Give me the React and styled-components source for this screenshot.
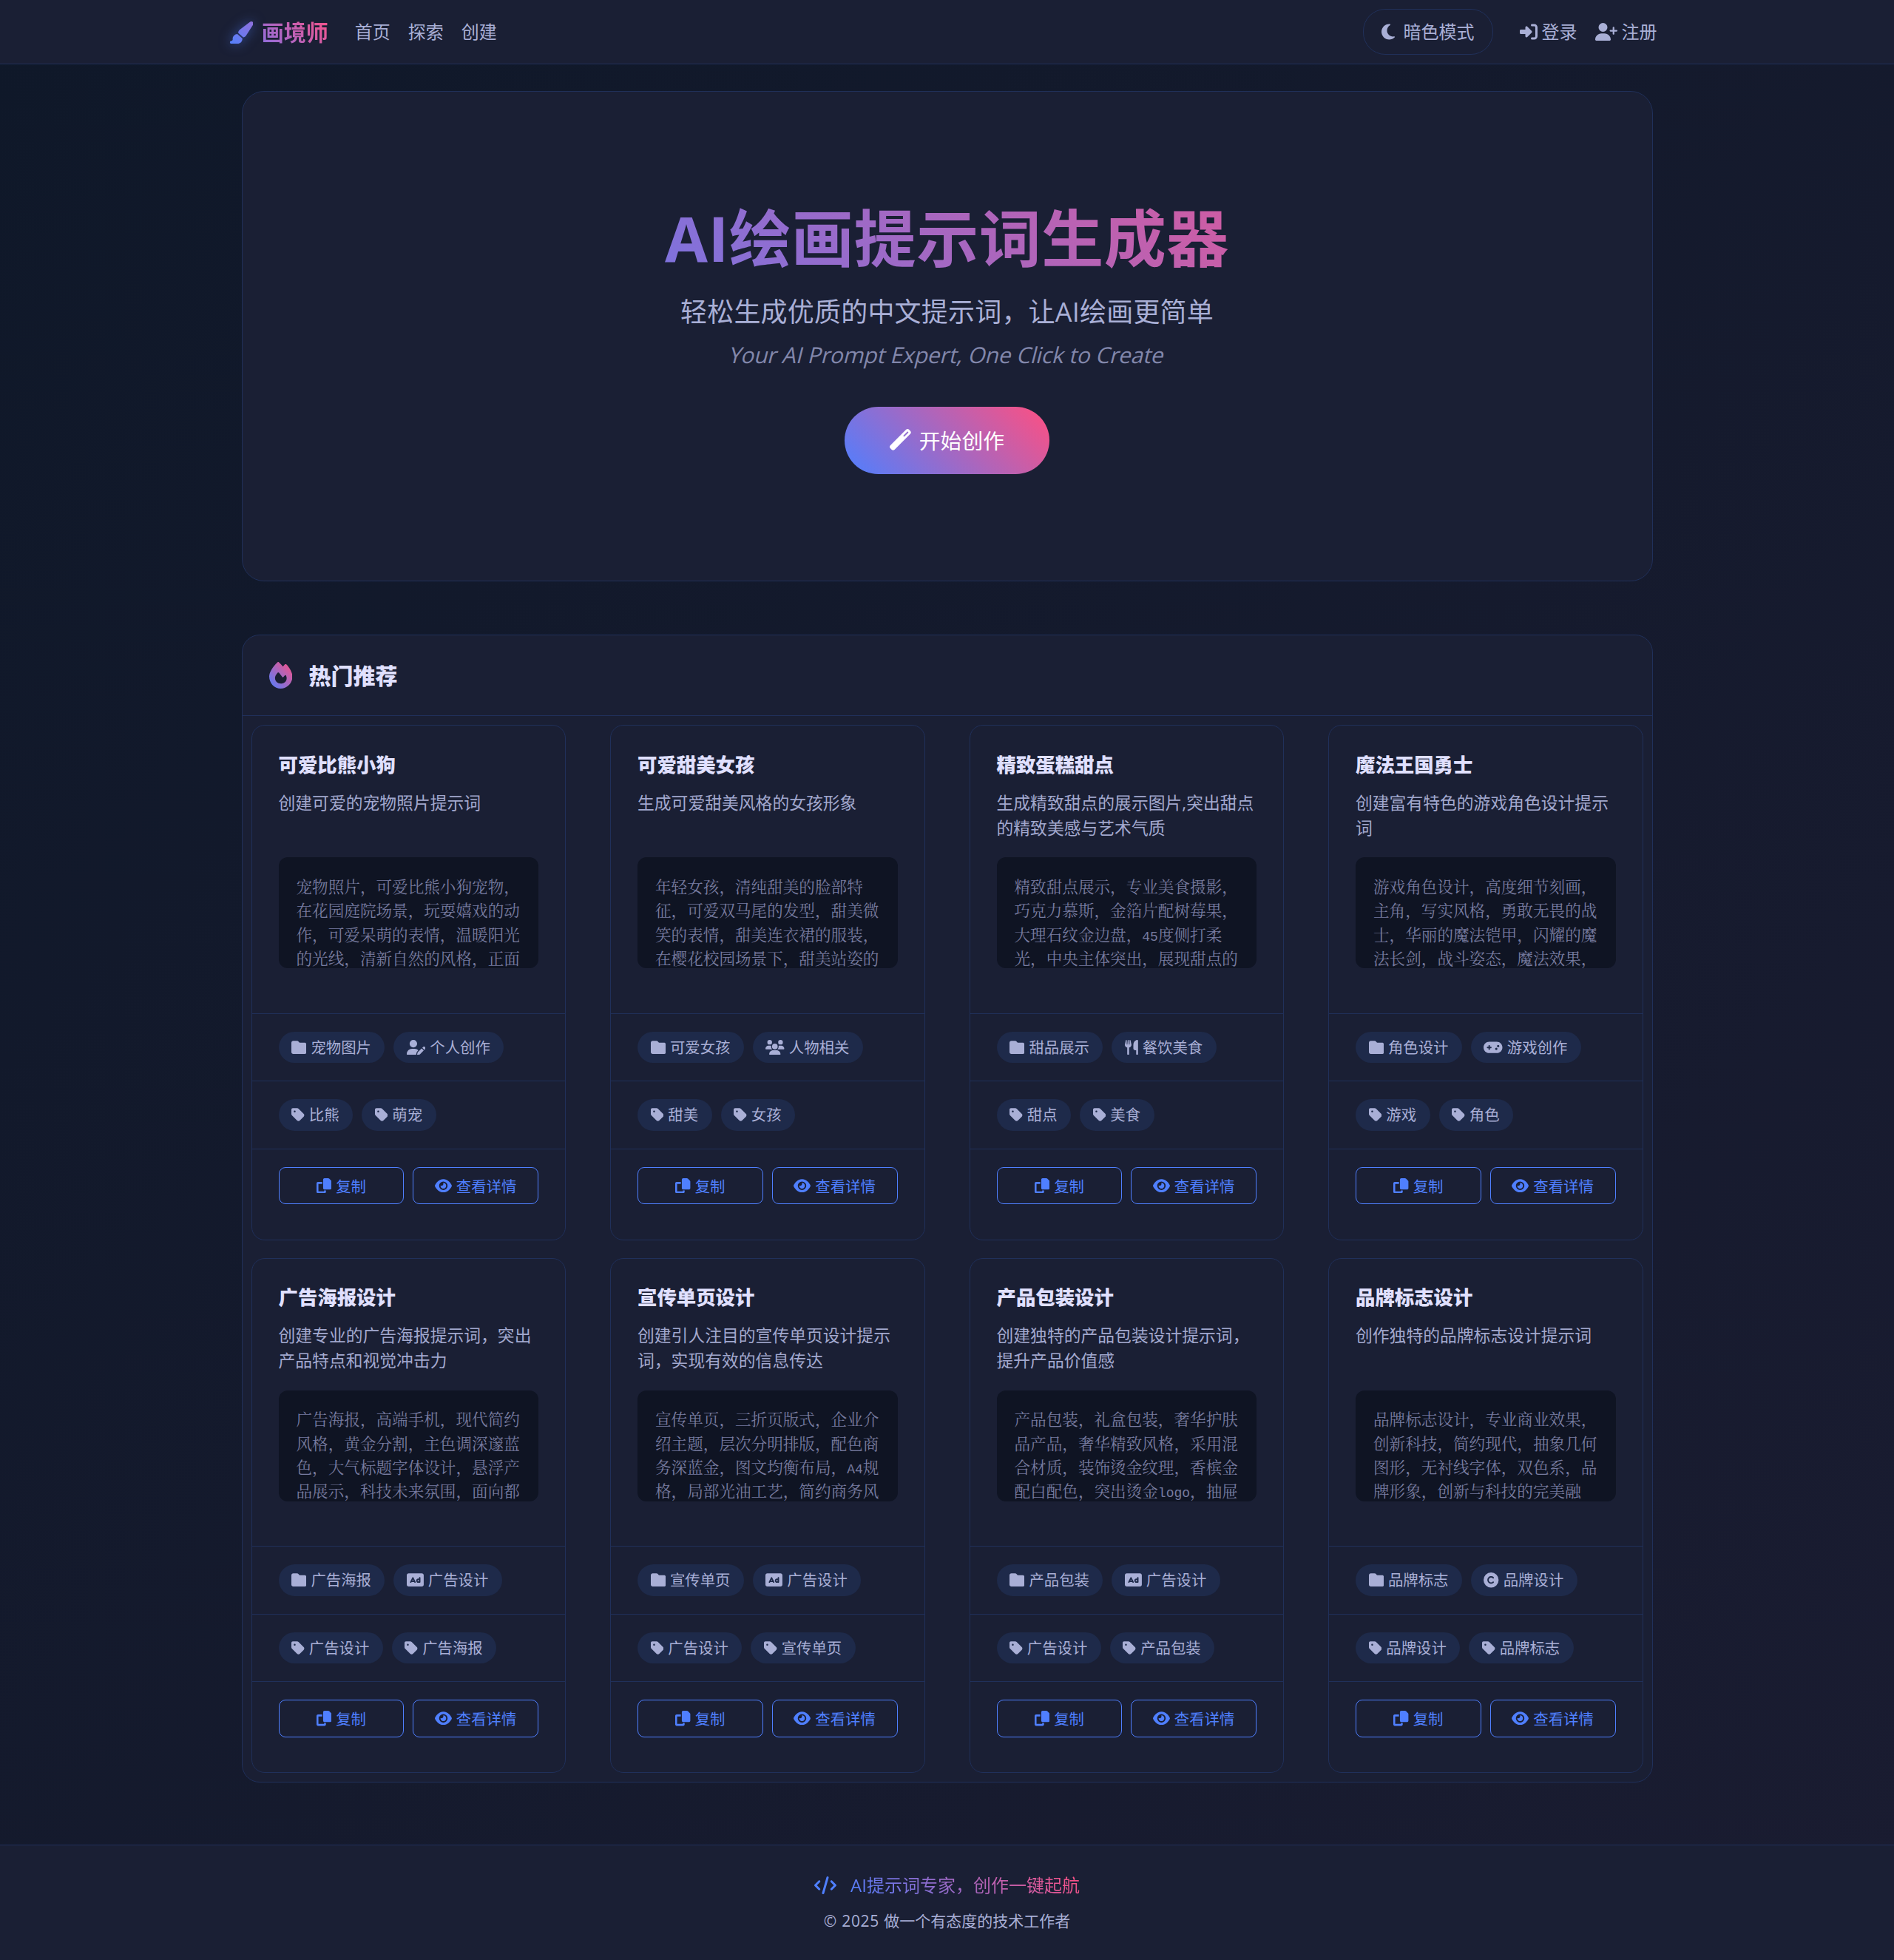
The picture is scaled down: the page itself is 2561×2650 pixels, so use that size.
import React from "react";
import styled, { createGlobalStyle } from "styled-components";
import {
  FaPaintbrush, FaMoon, FaRightToBracket, FaUserPlus, FaWandMagic, FaFire, FaFolder,
  FaUserPen, FaUsers, FaUtensils, FaGamepad, FaRectangleAd, FaCopyright, FaTag, FaEye, FaCode,
} from "react-icons/fa6";

const GlobalStyle = createGlobalStyle`
  *, *::before, *::after { box-sizing: border-box; }
  body {
    margin: 0;
    color: #e0e0ff;
    background: #14192c;
    font-family: "Open Sans", "Noto Sans CJK SC", sans-serif;
    font-size: 24px;
    line-height: 1.5;
  }
  h1, h2, h3, p { margin: 0; }
  svg { display: block; flex: none; }
`;

const accent = "linear-gradient(45deg, #4f7fff, #ff4f81)";
const line = "#20305a";
const surface = "#1a1f34";
const muted = "#a9afd6";

const Page = styled.div`
  min-height: 2650px;
  display: flex;
  flex-direction: column;
  background: linear-gradient(135deg, #0f1829 0%, #1a1c31 100%);
`;

/* Font Awesome glyphs are 512 units high and between 384 and 640 units wide. */
const Glyph = styled.span`
  display: flex;
  flex: none;
  svg {
    height: 1em;
    width: ${(p) => (p.$units || 512) / 512}em;
  }
`;

const Navbar = styled.header`
  height: 87px;
  background: ${surface};
  border-bottom: 1px solid ${line};
`;

const NavInner = styled.div`
  width: 1980px;
  height: 86px;
  margin: 0 auto;
  padding: 0 18px;
  display: flex;
  align-items: center;
`;

const Brand = styled.div`
  display: flex;
  align-items: center;
  gap: 11.5px;
  margin-right: 24px;
  font-size: 30px;
  font-weight: 700;
  line-height: 45px;
`;

const BrandGlyph = styled(Glyph)`
  margin-top: 1px;
  filter: drop-shadow(0 0 8px rgba(79, 124, 255, 0.5));
  svg path { fill: url(#brand-fill); }
`;

const BrandName = styled.span`
  background: linear-gradient(45deg, #8a6fe0, #fb5287);
  background-clip: text;
  -webkit-background-clip: text;
  color: transparent;
`;

const NavLink = styled.a`
  display: flex;
  align-items: center;
  gap: 6px;
  padding: 0 12px;
  color: ${muted};
  line-height: 36px;
`;

const Spacer = styled.div`
  flex: 1;
`;

const ThemeToggle = styled.button`
  display: flex;
  align-items: center;
  gap: 12px;
  height: 62px;
  margin: 0 24px 0 0;
  padding: 0 24px;
  border: 1px solid ${line};
  border-radius: 30px;
  background: transparent;
  color: ${muted};
  font: inherit;
`;

const Main = styled.main`
  width: 1908px;
  margin: 36px auto 0;
`;

const Hero = styled.section`
  height: 663px;
  padding-top: 135px;
  display: flex;
  flex-direction: column;
  align-items: center;
  background: ${surface};
  border: 1px solid ${line};
  border-radius: 30px;
`;

const HeroTitle = styled.h1`
  width: 1714px;
  text-align: center;
  font-size: 84px;
  font-weight: 700;
  line-height: 126px;
  letter-spacing: 0.5px;
  background: ${accent};
  background-clip: text;
  -webkit-background-clip: text;
  color: transparent;
`;

const HeroLead = styled.p`
  margin-top: 10px;
  font-size: 36px;
  line-height: 54px;
  letter-spacing: 0.2px;
  color: ${muted};
`;

const HeroTagline = styled.p`
  margin-top: 8px;
  font-size: 30px;
  line-height: 45px;
  letter-spacing: -0.16px;
  transform: skewX(-14deg);
  color: #8287ab;
`;

const StartButton = styled.button`
  display: flex;
  align-items: center;
  justify-content: center;
  gap: 11px;
  width: 277px;
  height: 91px;
  margin-top: 48px;
  padding: 0 0 2px;
  border: 0;
  border-radius: 46px;
  background: ${accent};
  color: #fff;
  font-family: inherit;
  font-size: 28.8px;
`;

const Panel = styled.section`
  margin-top: 72px;
  background: ${surface};
  border: 1px solid ${line};
  border-radius: 24px;
`;

const PanelHeader = styled.div`
  display: flex;
  align-items: center;
  gap: 22.5px;
  height: 109px;
  padding: 0 36px;
  border-bottom: 1px solid ${line};
`;

const PanelGlyph = styled(Glyph)`
  font-size: 36px;
  svg path { fill: url(#fire-fill); }
`;

const PanelTitle = styled.h2`
  padding-top: 1px;
  font-size: 30px;
  font-weight: 900;
  line-height: 45px;
`;

const CardGrid = styled.div`
  display: grid;
  grid-template-columns: repeat(4, 1fr);
  gap: 24px 60px;
  padding: 12px;
`;

const Card = styled.article`
  height: 696.5px;
  border: 1px solid ${line};
  border-radius: 18px;
  background: ${surface};
`;

const CardBody = styled.div`
  height: 388.6px;
  padding: 32.5px 36px 0;
`;

const CardTitle = styled.h3`
  font-size: 26.4px;
  font-weight: 900;
  line-height: 40px;
`;

const CardText = styled.p`
  height: 68.4px;
  margin: 15.2px 0 22.2px;
  font-size: 22.8px;
  line-height: 34.2px;
  color: #a2a8ce;
  white-space: pre-line;
`;

const Prompt = styled.div`
  height: 150px;
  padding: 22.5px 0 0 24px;
  overflow: hidden;
  border-radius: 12px;
  background: #0f1423;
  color: #777b9f;
  font-family: "Noto Serif CJK SC", "Liberation Serif", serif;
  font-size: 21.6px;
  line-height: 32.4px;
  white-space: pre;
`;

const Latin = styled.span`
  font-family: "Liberation Mono", monospace;
  font-size: 18px;
  line-height: 1;
`;

const TagRow = styled.div`
  display: flex;
  gap: 12px;
  height: 91.5px;
  padding: 24px 36px 0;
  border-top: 1px solid ${line};
`;

const Tag = styled.span`
  display: flex;
  align-items: center;
  gap: 6px;
  height: 42.6px;
  padding: 0 18.4px 0 17.5px;
  border-radius: 22px;
  background: #1e2a4a;
  color: ${muted};
  font-size: 20.4px;
`;

const Actions = styled(TagRow)`
  height: auto;
`;

const OutlineButton = styled.button`
  flex: 1;
  display: flex;
  align-items: center;
  justify-content: center;
  gap: 6px;
  height: 50.5px;
  padding: 0;
  border: 1px solid #4f7fff;
  border-radius: 9px;
  background: transparent;
  color: #4f7fff;
  font-family: inherit;
  font-size: 20.4px;
`;

const Footer = styled.footer`
  display: flex;
  flex-direction: column;
  align-items: center;
  flex: 1;
  margin-top: 84px;
  padding-top: 36px;
  background: ${surface};
  border-top: 1px solid ${line};
`;

const Slogan = styled.div`
  display: flex;
  align-items: center;
  gap: 19px;
  line-height: 36px;
  color: #4f7fff;
`;

const SloganText = styled.span`
  background: ${accent};
  background-clip: text;
  -webkit-background-clip: text;
  color: transparent;
`;

const Copyright = styled.p`
  margin-top: 14px;
  font-size: 21px;
  line-height: 32px;
  color: ${muted};
`;

const Year = styled.span`
  letter-spacing: 0.7px;
`;

const Gradients = () => (
  <svg width="0" height="0" style={{ position: "absolute" }} aria-hidden="true">
    <defs>
      <linearGradient id="brand-fill" x1="0" y1="1" x2="1" y2="0">
        <stop offset="0" stopColor="#5380fc" />
        <stop offset="1" stopColor="#9070dc" />
      </linearGradient>
      <linearGradient id="fire-fill" x1="0" y1="1" x2="1" y2="0">
        <stop offset="0" stopColor="#4f7fff" />
        <stop offset="1" stopColor="#ff4f81" />
      </linearGradient>
    </defs>
  </svg>
);

const CopyIcon = () => (
  <svg viewBox="0 0 512 512" fill="currentColor">
    <path d="M272 0H396.1c12.7 0 24.9 5.1 33.9 14.1l67.9 67.9c9 9 14.1 21.2 14.1 33.9V336c0 26.500-21.500 48-48 48H272c-26.500 0-48-21.500-48-48V48c0-26.500 21.500-48 48-48zM48 128H192v64H64V448H256V416h64v48c0 26.500-21.500 48-48 48H48c-26.500 0-48-21.500-48-48V176c0-26.500 21.500-48 48-48z" />
  </svg>
);

const cards = [
  { title: "可爱比熊小狗", text: "创建可爱的宠物照片提示词",
    prompt: "宠物照片，可爱比熊小狗宠物，\n在花园庭院场景，玩耍嬉戏的动\n作，可爱呆萌的表情，温暖阳光\n的光线，清新自然的风格，正面",
    category: "宠物图片", icon: FaUserPen, units: 640, scene: "个人创作", tags: ["比熊", "萌宠"] },
  { title: "可爱甜美女孩", text: "生成可爱甜美风格的女孩形象",
    prompt: "年轻女孩，清纯甜美的脸部特\n征，可爱双马尾的发型，甜美微\n笑的表情，甜美连衣裙的服装，\n在樱花校园场景下，甜美站姿的",
    category: "可爱女孩", icon: FaUsers, units: 640, scene: "人物相关", tags: ["甜美", "女孩"] },
  { title: "精致蛋糕甜点", text: "生成精致甜点的展示图片,突出甜点\n的精致美感与艺术气质",
    prompt: "精致甜点展示，专业美食摄影，\n巧克力慕斯，金箔片配树莓果，\n大理石纹金边盘，45度侧打柔\n光，中央主体突出，展现甜点的",
    category: "甜品展示", icon: FaUtensils, units: 448, scene: "餐饮美食", tags: ["甜点", "美食"] },
  { title: "魔法王国勇士", text: "创建富有特色的游戏角色设计提示\n词",
    prompt: "游戏角色设计，高度细节刻画，\n主角，写实风格，勇敢无畏的战\n士，华丽的魔法铠甲，闪耀的魔\n法长剑，战斗姿态，魔法效果，",
    category: "角色设计", icon: FaGamepad, units: 640, scene: "游戏创作", tags: ["游戏", "角色"] },
  { title: "广告海报设计", text: "创建专业的广告海报提示词，突出\n产品特点和视觉冲击力",
    prompt: "广告海报，高端手机，现代简约\n风格，黄金分割，主色调深邃蓝\n色，大气标题字体设计，悬浮产\n品展示，科技未来氛围，面向都",
    category: "广告海报", icon: FaRectangleAd, units: 576, scene: "广告设计", tags: ["广告设计", "广告海报"] },
  { title: "宣传单页设计", text: "创建引人注目的宣传单页设计提示\n词，实现有效的信息传达",
    prompt: "宣传单页，三折页版式，企业介\n绍主题，层次分明排版，配色商\n务深蓝金，图文均衡布局，A4规\n格，局部光油工艺，简约商务风",
    category: "宣传单页", icon: FaRectangleAd, units: 576, scene: "广告设计", tags: ["广告设计", "宣传单页"] },
  { title: "产品包装设计", text: "创建独特的产品包装设计提示词，\n提升产品价值感",
    prompt: "产品包装，礼盒包装，奢华护肤\n品产品，奢华精致风格，采用混\n合材质，装饰烫金纹理，香槟金\n配白配色，突出烫金logo，抽屉",
    category: "产品包装", icon: FaRectangleAd, units: 576, scene: "广告设计", tags: ["广告设计", "产品包装"] },
  { title: "品牌标志设计", text: "创作独特的品牌标志设计提示词",
    prompt: "品牌标志设计，专业商业效果，\n创新科技，简约现代，抽象几何\n图形，无衬线字体，双色系，品\n牌形象，创新与科技的完美融",
    category: "品牌标志", icon: FaCopyright, units: 512, scene: "品牌设计", tags: ["品牌设计", "品牌标志"] },
];

const withLatin = (s) =>
  s.split(/([A-Za-z0-9]+)/).map((part, i) => (i % 2 ? <Latin key={i}>{part}</Latin> : part));

const PromptCard = ({ title, text, prompt, category, icon: Icon, units, scene, tags }) => (
  <Card>
    <CardBody>
      <CardTitle>{title}</CardTitle>
      <CardText>{text}</CardText>
      <Prompt>{withLatin(prompt)}</Prompt>
    </CardBody>
    <TagRow>
      <Tag><Glyph><FaFolder /></Glyph>{category}</Tag>
      <Tag><Glyph $units={units}><Icon /></Glyph>{scene}</Tag>
    </TagRow>
    <TagRow>
      {tags.map((t) => <Tag key={t}><Glyph $units={448}><FaTag /></Glyph>{t}</Tag>)}
    </TagRow>
    <Actions>
      <OutlineButton><Glyph><CopyIcon /></Glyph>复制</OutlineButton>
      <OutlineButton><Glyph $units={576}><FaEye /></Glyph>查看详情</OutlineButton>
    </Actions>
  </Card>
);

export default function App() {
  return (
    <Page>
      <GlobalStyle />
      <Gradients />
      <Navbar>
        <NavInner>
          <Brand>
            <BrandGlyph $units={576}><FaPaintbrush /></BrandGlyph>
            <BrandName>画境师</BrandName>
          </Brand>
          <NavLink>首页</NavLink>
          <NavLink>探索</NavLink>
          <NavLink>创建</NavLink>
          <Spacer />
          <ThemeToggle><Glyph $units={384}><FaMoon /></Glyph>暗色模式</ThemeToggle>
          <NavLink><Glyph><FaRightToBracket /></Glyph>登录</NavLink>
          <NavLink><Glyph $units={640}><FaUserPlus /></Glyph>注册</NavLink>
        </NavInner>
      </Navbar>
      <Main>
        <Hero>
          <HeroTitle>AI绘画提示词生成器</HeroTitle>
          <HeroLead>轻松生成优质的中文提示词，让AI绘画更简单</HeroLead>
          <HeroTagline>Your AI Prompt Expert, One Click to Create</HeroTagline>
          <StartButton><Glyph><FaWandMagic /></Glyph>开始创作</StartButton>
        </Hero>
        <Panel>
          <PanelHeader>
            <PanelGlyph $units={448}><FaFire /></PanelGlyph>
            <PanelTitle>热门推荐</PanelTitle>
          </PanelHeader>
          <CardGrid>
            {cards.map((c) => <PromptCard key={c.title} {...c} />)}
          </CardGrid>
        </Panel>
      </Main>
      <Footer>
        <Slogan>
          <Glyph $units={640}><FaCode /></Glyph>
          <SloganText>AI提示词专家，创作一键起航</SloganText>
        </Slogan>
        <Copyright><Year>© 2025 </Year>做一个有态度的技术工作者</Copyright>
      </Footer>
    </Page>
  );
}
